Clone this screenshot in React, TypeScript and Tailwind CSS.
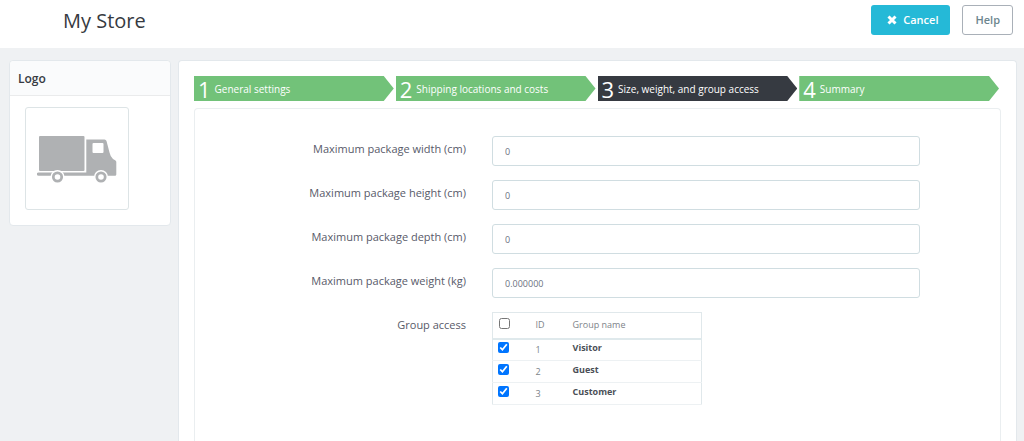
import { useState } from "react";

const steps = [
  { number: 1, label: "General settings" },
  { number: 2, label: "Shipping locations and costs" },
  { number: 3, label: "Size, weight, and group access" },
  { number: 4, label: "Summary" },
];

const fields = [
  { id: "max_width", label: "Maximum package width (cm)", value: "0" },
  { id: "max_height", label: "Maximum package height (cm)", value: "0" },
  { id: "max_depth", label: "Maximum package depth (cm)", value: "0" },
  { id: "max_weight", label: "Maximum package weight (kg)", value: "0.000000" },
];

const groups = [
  { id: 1, name: "Visitor" },
  { id: 2, name: "Guest" },
  { id: 3, name: "Customer" },
];

function TruckLogo() {
  return (
    <svg className="w-20 h-12" viewBox="0 0 80 48" fill="#afb1b3" aria-hidden="true">
      <rect x="2" y="1" width="45.500" height="35" rx="1" />
      <path
        fillRule="evenodd"
        d="M49.300 4.500h18.200q1.500 0 2 1.500l3 11.500q1 4.500 3.500 6.500l2.500 1.500q.8.500.8 1.500V39.500q0 1.300-1.300 1.300H1.500a1.500 1.500 0 0 1 0-3.300H49.300zM56.500 8a1 1 0 0 0-1 1v8a1 1 0 0 0 1 1h9a1 1 0 0 0 1-1V9a1 1 0 0 0-1-1z"
      />
      <g stroke="#fff" strokeWidth="1.5">
        <circle cx="20.500" cy="42" r="6.300" />
        <circle cx="64" cy="42" r="6.300" />
      </g>
      <circle cx="20.500" cy="42" r="2.800" fill="#fff" />
      <circle cx="64" cy="42" r="2.800" fill="#fff" />
    </svg>
  );
}

export default function App() {
  const [values, setValues] = useState<Record<string, string>>(
    Object.fromEntries(fields.map((field) => [field.id, field.value]))
  );
  const [selected, setSelected] = useState<number[]>([1, 2, 3]);
  const [checkAll, setCheckAll] = useState(false);
  const activeStep = 3;

  function toggleAll() {
    setSelected(checkAll ? [] : groups.map((group) => group.id));
    setCheckAll(!checkAll);
  }

  function toggleGroup(id: number) {
    setSelected((prev) => (prev.includes(id) ? prev.filter((item) => item !== id) : [...prev, id]));
  }

  return (
    <div className="min-h-screen flex flex-col bg-[#eff1f3] font-['Open_Sans',sans-serif] text-[#585a69]">
      <header className="flex items-start justify-between h-12 pl-[63px] pr-[11px] pt-[5px] bg-white">
        <h1 className="text-xl leading-8 text-[#363a41]">My Store</h1>
        <div className="flex gap-3">
          <button
            type="button"
            className="flex items-center gap-1.5 h-[30px] pl-4 pr-3 rounded-[3px] bg-[#25b9d7] text-[11px] font-semibold text-white"
          >
            <svg className="w-2.5 h-2.5" viewBox="0 0 10 10" stroke="currentColor" strokeWidth="3" aria-hidden="true">
              <path d="M1.500 1.500l7 7M8.500 1.500l-7 7" />
            </svg>
            Cancel
          </button>
          <button
            type="button"
            className="h-[30px] px-3 rounded-[3px] border border-[#a9b0b8] bg-white text-[11px] font-semibold text-[#6c868e]"
          >
            Help
          </button>
        </div>
      </header>

      <div className="flex-1 flex gap-[7px] pl-[9px] pr-[7px] pt-3">
        {/* Sidebar */}
        <aside className="w-[162px] shrink-0 self-start rounded-[4px] border border-[#e3e8ec] bg-white">
          <h2 className="h-[35px] px-2 rounded-t-[4px] border-b border-[#eaebec] bg-[#fafbfc] text-xs leading-[35px] font-semibold text-[#363a41]">
            Logo
          </h2>
          <div className="px-[15px] pt-[11px] pb-[15px]">
            <div className="flex items-center justify-center w-26 h-[103px] rounded-[3px] border border-[#dde4e6]">
              <TruckLogo />
            </div>
          </div>
        </aside>

        {/* Carrier wizard */}
        <main className="flex-1 flex flex-col px-[15px] pt-[15px] rounded-t-[4px] border border-b-0 border-[#e3e8ec] bg-white">
          <ol className="flex gap-0.5 pr-0.5">
            {steps.map((step) => (
              <li
                key={step.number}
                className={`flex-1 h-[25px] [clip-path:polygon(0_0,calc(100%-10px)_0,100%_50%,calc(100%-10px)_100%,0_100%)] ${
                  step.number === activeStep ? "bg-[#363a41]" : "bg-[#72c279]"
                }`}
              >
                <a href={`#step-${step.number}`} className="flex items-center gap-1 h-full pl-1 text-white">
                  <span className="text-[22px] leading-6">{step.number}</span>
                  <span className="text-[10px] leading-6 whitespace-nowrap">{step.label}</span>
                </a>
              </li>
            ))}
          </ol>

          <form className="flex-1 flex flex-col gap-3.5 mt-[7px] pt-[27px] pr-20 rounded-t-[4px] border border-b-0 border-[#eaeef0]">
            {fields.map((field) => (
              <div key={field.id} className="grid grid-cols-[19fr_30fr] gap-x-[26px]">
                <label htmlFor={field.id} className="text-right text-[11px] leading-[26px]">
                  {field.label}
                </label>
                <input
                  id={field.id}
                  type="text"
                  value={values[field.id]}
                  onChange={(e) => setValues({ ...values, [field.id]: e.target.value })}
                  className="w-full h-[30px] px-3 rounded-[3px] border border-[#d0dde1] text-[9px] text-[#6b7280] outline-none focus:border-[#25b9d7]"
                />
              </div>
            ))}

            <div className="grid grid-cols-[19fr_30fr] gap-x-[26px]">
              <span id="group-access" className="text-right text-[11px] leading-[26px]">
                Group access
              </span>
              <table
                aria-labelledby="group-access"
                className="w-[210px] justify-self-start border border-[#e0e8eb] text-left text-[9px] leading-4"
              >
                <thead>
                  <tr className="h-[26px] border-b-2 border-[#dfe9ec] text-[#7d8389]">
                    <th className="w-9 pl-1.5 pb-1">
                      <input
                        type="checkbox"
                        aria-label="Select all groups"
                        checked={checkAll}
                        onChange={toggleAll}
                        className="block w-[11px] h-[11px]"
                      />
                    </th>
                    <th className="pl-[7px] w-9 font-normal">ID</th>
                    <th className="pl-2 font-normal">Group name</th>
                  </tr>
                </thead>
                <tbody>
                  {groups.map((group) => (
                    <tr key={group.id} className="h-[22px] border-b border-[#edf1f3]">
                      <td className="pl-[5px] pb-1">
                        <input
                          type="checkbox"
                          id={`group-${group.id}`}
                          checked={selected.includes(group.id)}
                          onChange={() => toggleGroup(group.id)}
                          className="block w-[11px] h-[11px]"
                        />
                      </td>
                      <td className="pl-[7px] text-[#7d8389]">{group.id}</td>
                      <td className="pl-2 pb-1 font-bold text-[#4b4f57]">
                        <label htmlFor={`group-${group.id}`}>{group.name}</label>
                      </td>
                    </tr>
                  ))}
                </tbody>
              </table>
            </div>
          </form>
        </main>
      </div>
    </div>
  );
}
